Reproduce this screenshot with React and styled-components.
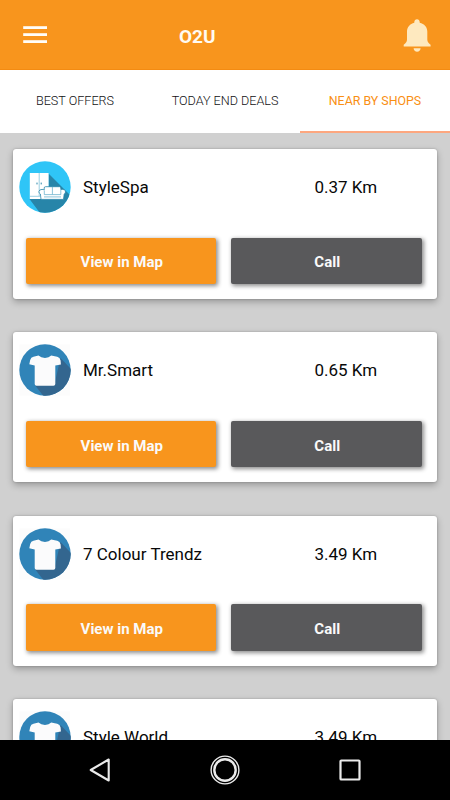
import React from 'react';
import styled, { createGlobalStyle } from 'styled-components';

const GlobalStyle = createGlobalStyle`
    * {
        box-sizing: border-box;
    }

    body {
        margin: 0;
        font-family: Roboto, "Liberation Sans", sans-serif;
    }
`

const Screen = styled.div`
    display: flex;
    flex-direction: column;
    width: 450px;
    height: 800px;
    overflow: hidden;
    background: #d0d0d0;
`

const Header = styled.header`
    display: flex;
    flex: none;
    align-items: center;
    height: 70px;
    padding: 0 19px 0 23px;
    background: #f8951d;
    border-bottom: 1px solid #f38b12;
`

const Title = styled.h1`
    flex: 1;
    margin: 4px 0 0;
    padding-left: 131px;
    color: #fffaf2;
    font-size: 19px;
    line-height: 24px;
    font-weight: 700;
`

const IconButton = styled.button`
    display: flex;
    padding: 0;
    border: none;
    background: none;
    cursor: pointer;
`

const Tabs = styled.nav`
    display: grid;
    flex: none;
    grid-template-columns: repeat(3, 1fr);
    height: 62.5px;
    background: white;
`

const Tab = styled.button`
    padding: 1px 0 0;
    border: none;
    border-bottom: 2px solid ${props => props.$active ? '#fda77f' : 'transparent'};
    background: none;
    color: ${props => props.$active ? '#f98f13' : '#101012'};
    font-family: inherit;
    font-size: ${props => props.$active ? '12.4px' : '12.6px'};
    font-weight: ${props => props.$active ? 400 : 300};
    white-space: nowrap;
    cursor: pointer;
`

const List = styled.main`
    display: flex;
    flex: 1;
    flex-direction: column;
    gap: 33.3px;
    min-height: 0;
    padding: 16.5px 13px 0;
    overflow: hidden;
`

const Card = styled.section`
    flex: none;
    height: 150px;
    padding: 12px 15px 0 6px;
    border-radius: 3px;
    background: white;
    box-shadow: 0 0 2px rgba(0, 0, 0, 0.25), 0 3px 7px rgba(0, 0, 0, 0.27);
`

const ShopRow = styled.div`
    display: flex;
    align-items: center;
    height: 52px;
`

const ShopName = styled.p`
    width: 231.5px;
    margin: 0 0 0 12px;
    color: #080808;
    font-size: 17px;
    line-height: 22px;
`

const Distance = styled.p`
    margin: 0;
    color: #080808;
    font-size: 17px;
    line-height: 22px;
`

const Actions = styled.div`
    display: flex;
    gap: 15px;
    margin-top: 24.5px;
    padding-left: 6.5px;
`

const ActionButton = styled.button`
    width: 190.5px;
    height: 46.5px;
    padding: 3px 0 0 2px;
    border: none;
    border-radius: 2px;
    background: ${props => props.$color};
    color: #fafafa;
    box-shadow: 1.5px 1.5px 4px rgba(0, 0, 0, 0.45);
    font-family: inherit;
    font-size: 15px;
    font-weight: 700;
    cursor: pointer;
`

const SystemBar = styled.footer`
    display: grid;
    flex: none;
    grid-template-columns: 125px 125px 125px;
    align-items: center;
    justify-content: center;
    justify-items: center;
    height: 60px;
    background: black;
`

const MenuIcon = () => (
    <svg width="25" height="18" viewBox="0 0 25 18" fill="#fffdf8">
        <rect x="0.2" y="0.2" width="23.8" height="2.8" />
        <rect x="0.2" y="7.2" width="23.8" height="2.8" />
        <rect x="0.2" y="14.2" width="23.8" height="2.8" />
    </svg>
)

const BellIcon = () => (
    <svg width="28" height="34" viewBox="0 0 28 34" fill="#fee9bf">
        <path d="M14 1.2C12.5 1.2 11.3 2.4 11.3 4V4.8C7 5.8 4 9.2 4 13.6V21.5C4 23.8 3 25 0.7 26.8V28.5H27.6V26.8C25.3 25 24.3 23.8 24.3 21.5V13.6C24.3 9.2 21.3 5.8 16.7 4.8V4C16.7 2.4 15.5 1.2 14 1.2Z" />
        <path d="M10.6 30.2H17.6C17.4 32.3 16 33.8 14.1 33.8S10.8 32.3 10.6 30.2Z" />
    </svg>
)

const FurnitureIcon = () => (
    <svg width="52" height="52" viewBox="0 0 52 52">
        <defs>
            <clipPath id="furniture">
                <circle cx="26" cy="26" r="25.7" />
            </clipPath>
        </defs>
        <g clipPath="url(#furniture)">
            <rect width="52" height="52" fill="#2fc5f7" />
            <path d="M29.5 12.5L52 35V52H21L10.5 38L29.5 36Z" fill="#2785a9" />
            <rect x="10.8" y="12" width="18.8" height="26" fill="white" />
            <path d="M20.2 12V35M10.8 35.3H21" fill="none" stroke="#82c4dc" strokeWidth="0.8" />
            <path d="M18 21.6V23.4M22.2 21.6V23.4" fill="none" stroke="#2785a9" strokeWidth="1" />
            <path d="M25.2 28V27Q25.2 25.7 26.5 25.7H40.5Q41.8 25.7 41.8 27V28.4Q46.5 27.9 46.5 31Q46.5 32.3 45.2 33L44.5 38.4H22L21.4 33Q19.9 32.2 19.9 30.8Q20.1 28.4 23 28.4Q24.5 28.4 25.2 29Z" fill="white" stroke="#2785a9" strokeWidth="0.8" />
            <path d="M33.4 26V33.4M25.3 29.5V33.6H41.8V28.6M25 35.9H42" fill="none" stroke="#5aabc8" strokeWidth="0.7" />
        </g>
    </svg>
)

const ShirtIcon = () => (
    <svg width="52" height="52" viewBox="0 0 52 52">
        <defs>
            <clipPath id="shirt">
                <circle cx="26" cy="26" r="25.7" />
            </clipPath>
        </defs>
        <rect x="0.5" y="0.5" width="50.5" height="51" fill="#fcfcfc" />
        <g clipPath="url(#shirt)">
            <rect width="52" height="52" fill="#3084b8" />
            <path d="M41.5 14L55 28V54H26L15.8 41L36 38Z" fill="#33668f" />
            <path d="M19.5 11.6Q22 14 26 14Q30 14 32.2 11.6L38.2 12.8Q41 13.4 41.6 16.6L41.9 20.5L36.3 21.6V40Q36.3 41.8 34.5 41.8H17.5Q15.7 41.8 15.7 40V21.6L10.3 20.2L11.2 16Q11.9 13.2 14.5 12.7Z" fill="#fbfbfc" />
        </g>
    </svg>
)

const BackIcon = () => (
    <svg width="22" height="26" viewBox="0 0 22 26" fill="none" stroke="#ebebeb" strokeWidth="2.1" strokeLinejoin="round">
        <path d="M19.7 2.5V23.5L1.7 13Z" />
    </svg>
)

const HomeIcon = () => (
    <svg width="30" height="30" viewBox="0 0 30 30" fill="none" stroke="#ebebeb">
        <circle cx="15" cy="15" r="13.9" strokeWidth="1.4" />
        <circle cx="15" cy="15" r="10.7" strokeWidth="2.4" />
    </svg>
)

const RecentIcon = () => (
    <svg width="22" height="22" viewBox="0 0 22 22" fill="none" stroke="#ebebeb" strokeWidth="2.2">
        <rect x="1.5" y="1.5" width="19" height="19" rx="0.8" />
    </svg>
)

const shops = [
    { name: "StyleSpa", distance: "0.37 Km", icon: FurnitureIcon },
    { name: "Mr.Smart", distance: "0.65 Km", icon: ShirtIcon },
    { name: "7 Colour Trendz", distance: "3.49 Km", icon: ShirtIcon },
    { name: "Style World", distance: "3.49 Km", icon: ShirtIcon }
]

const ShopCard = (props) => {
    const Icon = props.shop.icon

    return (
        <Card>
            <ShopRow>
                <Icon />
                <ShopName>{props.shop.name}</ShopName>
                <Distance>{props.shop.distance}</Distance>
            </ShopRow>
            <Actions>
                <ActionButton $color="#f8951d">View in Map</ActionButton>
                <ActionButton $color="#59595b">Call</ActionButton>
            </Actions>
        </Card>
    )
}

const App = () => {
    return (
        <>
            <GlobalStyle />
            <Screen>
                <Header>
                    <IconButton aria-label="Menu"><MenuIcon /></IconButton>
                    <Title>O2U</Title>
                    <IconButton aria-label="Notifications"><BellIcon /></IconButton>
                </Header>
                <Tabs>
                    <Tab>BEST OFFERS</Tab>
                    <Tab>TODAY END DEALS</Tab>
                    <Tab $active>NEAR BY SHOPS</Tab>
                </Tabs>
                <List>
                    {shops.map(shop => <ShopCard key={shop.name} shop={shop} />)}
                </List>
                <SystemBar>
                    <BackIcon />
                    <HomeIcon />
                    <RecentIcon />
                </SystemBar>
            </Screen>
        </>
    );
}

export default App;
